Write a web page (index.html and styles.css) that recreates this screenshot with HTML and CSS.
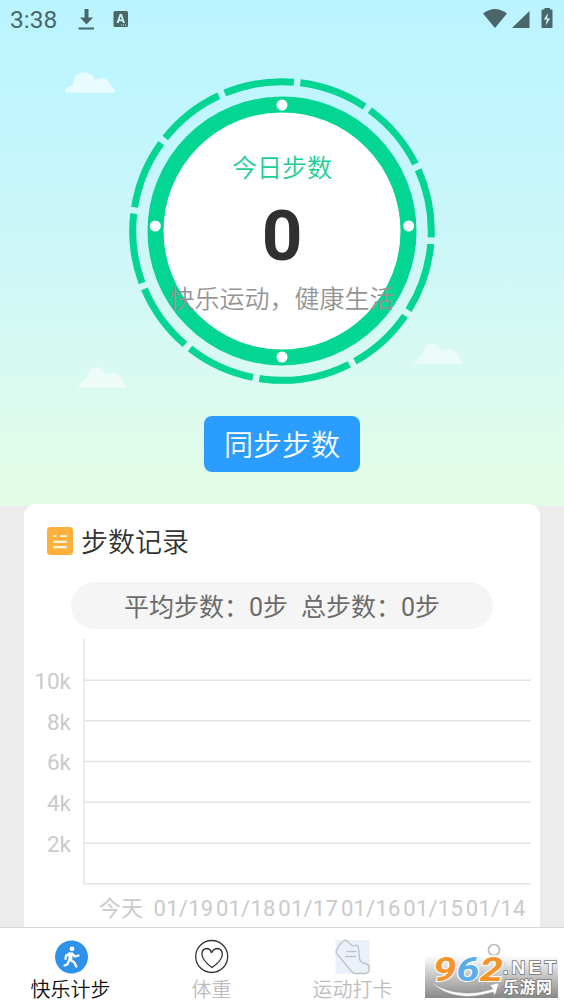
FILE: index.html
```html
<!DOCTYPE html>
<html lang="zh-CN">
<head>
<meta charset="utf-8">
<title>快乐计步</title>
<link rel="stylesheet" href="styles.css">
</head>
<body>
<div class="app">
  <section class="hero">
    <header class="status">
      <span class="clock">3:38</span>
      <svg class="status-left" width="56" height="24" viewBox="0 0 56 24">
        <path d="M7.500 0h4v8.500h4.500l-6.500 7L3 8.500h4.500zM1.500 18.500h15.500v2H1.500z"/>
        <rect x="36.500" y="2" width="14.500" height="16" rx="1.500"/>
        <path class="cut" d="M39.500 14L42.700 5h2.200L48 14h-2.100l-.6-1.800h-3l-.6 1.800zM42.800 10.600h2l-1-3.300z" fill-rule="evenodd"/>
        <path class="cut" d="M44 15.500h1v1h-1zM46 15.500h1v1h-1zM48 15.500h1v1h-1z"/>
      </svg>
      <svg class="status-right" width="72" height="24" viewBox="0 0 72 24">
        <path d="M0 5.500Q12-3.500 24 5.500L12 20z"/>
        <path d="M46.500 3v17h-17.500z"/>
        <path d="M61.500 0h5.500v1.500h1.500a1 1 0 0 1 1 1V19a1 1 0 0 1-1 1h-9a1 1 0 0 1-1-1V2.500a1 1 0 0 1 1-1h2z"/>
        <path class="cut" d="M65 5l-4.300 6.500h3L62.700 17.500l4.500-7h-3z"/>
      </svg>
    </header>
    <svg class="cloud cloud-a" viewBox="0 0 50 21"><path d="M1 20.500Q-1 18 1.500 16Q5 15 8 12.500Q8.500 3 16 .5Q26-1.500 30 8Q35 4.500 40.500 7Q45 10 46.500 14.500Q50 16 50 20.500z"/></svg>
    <svg class="cloud cloud-b" viewBox="0 0 50 21"><path d="M0 20.500Q3 16.500 8 13.500Q10 11 11 6Q14 0 20 0Q26 1 29 8Q35 4.500 40.500 7Q45 10 46.500 14.500Q49 17 50 20.500z"/></svg>
    <svg class="cloud cloud-c" viewBox="0 0 50 21"><path d="M0 20.500Q3 16.500 8 13.500Q10 11 11 6Q14 0 20 0Q26 1 29 8Q35 4.500 40.500 7Q45 10 46.500 14.500Q49 17 50 20.500z"/></svg>
    <div class="dial">
      <svg class="ring" width="308" height="308" viewBox="0 0 308 308">
        <circle class="ring-dashes" cx="154" cy="154" r="149.300" pathLength="360" transform="rotate(-82.950 154 154)"/>
        <circle class="ring-body" cx="154" cy="154" r="126.500"/>
        <g fill="#fff"><circle cx="154" cy="28" r="5.500"/><circle cx="27.300" cy="149" r="5.500"/><circle cx="280.700" cy="149" r="5.500"/><circle cx="154" cy="280" r="5.500"/></g>
      </svg>
      <div class="dial-text">
        <div class="dial-title">今日步数</div>
        <div class="dial-value">0</div>
        <div class="dial-note">快乐运动，健康生活</div>
      </div>
    </div>
    <button class="sync">同步步数</button>
  </section>

  <main class="card">
    <h2 class="card-title">
      <svg width="26" height="28" viewBox="0 0 26 28"><rect width="26" height="28" rx="3.500" fill="#ffb03c"/><g stroke="#fff3dc" stroke-width="2.200" stroke-linecap="round"><path d="M7 9h1.500M14 9h5M7 14.800h12M7 20.200h12"/></g></svg>
      <span>步数记录</span>
    </h2>
    <div class="summary"><span>平均步数：0步</span><span>总步数：0步</span></div>
    <svg class="chart" width="516" height="290" viewBox="24 638 516 290">
      <g class="grid"><path d="M84 680.200H531M84 720.800H531M84 761.500H531M84 802.300H531M84 843.200H531"/></g>
      <path class="axis" d="M84 638.500V883.800H531"/>
      <g class="ylabels"><text x="71" y="689">10k</text><text x="71" y="729.500">8k</text><text x="71" y="770">6k</text><text x="71" y="811">4k</text><text x="71" y="852">2k</text></g>
      <g class="xlabels"><text x="121" y="916">今天</text><text x="183.500" y="916">01/19</text><text x="245.800" y="916">01/18</text><text x="308.200" y="916">01/17</text><text x="370.800" y="916">01/16</text><text x="433.200" y="916">01/15</text><text x="495.700" y="916">01/14</text></g>
    </svg>
  </main>

  <nav class="tabs">
    <div class="tab active">
      <svg width="34" height="36" viewBox="0 0 34 36"><circle cx="17.500" cy="18" r="16.500" fill="#2e91ea"/><circle cx="18" cy="9.800" r="2.400" fill="#fff"/><path d="M15.500 14.500L12 16.800l-.5 3M18.500 15l2.500 2.500 3.500-1M16.500 21l3.800 2.500 2 4M14.800 22l-1.300 3.300-3 1.300" fill="none" stroke="#fff" stroke-width="2.300" stroke-linecap="round" stroke-linejoin="round"/><path d="M14.500 13.500h4.500l-.8 8h-4z" fill="#fff"/></svg>
      <span>快乐计步</span>
    </div>
    <div class="tab">
      <svg width="34" height="36" viewBox="0 0 34 36" fill="none" stroke="#333" stroke-width="1.300"><circle cx="16.700" cy="17.500" r="16"/><path d="M16.500 14Q15.500 9.500 11.500 9.500Q6.500 10 7 16Q8 22 17 28.500Q26.500 22 27.300 16Q27.500 10 22.500 9.500Q18.500 9.500 16.500 14"/></svg>
      <span>体重</span>
    </div>
    <div class="tab">
      <svg width="36" height="36" viewBox="0 0 36 36" fill="none" stroke="#bfc4ca" stroke-width="1.400" stroke-linejoin="round" stroke-linecap="round"><rect x=".5" y="1" width="34.500" height="34" fill="#ebf1fa" stroke="none"/><path d="M8.500 2Q4.500 5 1 12.500Q1 14 2.500 15.500L17 33Q18.500 34.500 21 34.500H30.500Q34 34 34.300 29.500Q34.500 26 31.500 25Q25.500 24 24.500 20L23.500 9Q23 5.500 20.500 6.500Q17.500 7.500 15.500 5.500L11.500 1.500Q10 .8 8.500 2zM12 12.500h9M10.500 17.500h10"/></svg>
      <span>运动打卡</span>
    </div>
    <div class="tab">
      <svg width="36" height="36" viewBox="0 0 36 36" fill="none" stroke="#b9b9b9" stroke-width="1.700"><circle cx="18" cy="11" r="5.500"/><path d="M6 35V28Q7 19 18 19Q29 19 30 28V35"/></svg>
      <span>我的</span>
    </div>
  </nav>

  <div class="watermark">
    <svg width="133" height="43" viewBox="0 0 133 43">
      <defs><linearGradient id="haze" x2="0" y2="1"><stop offset="0" stop-color="#fff" stop-opacity=".7"/><stop offset=".25" stop-color="#ddd" stop-opacity=".88"/><stop offset="1" stop-color="#7c7c7c" stop-opacity=".9"/></linearGradient></defs>
      <rect width="133" height="43" fill="url(#haze)"/>
      <path d="M6 27Q31 45 68 34L65 30L74 28L70 40L68 37Q29 49 6 27z" fill="#fff" stroke="#999" stroke-width=".4"/>
      <text class="mark-num" x="8" y="26" textLength="70" lengthAdjust="spacingAndGlyphs"><tspan fill="#f7932b">9</tspan><tspan fill="#59aeea">6</tspan><tspan fill="#f7932b">2</tspan></text>
      <text class="mark-net" x="78" y="19" textLength="53">.NET</text>
      <text class="mark-cn" x="78" y="38" textLength="49">乐游网</text>
    </svg>
  </div>
</div>
</body>
</html>
```
FILE: styles.css
```css
* { box-sizing: border-box; }
body {
  margin: 0;
  font-family: Roboto, "Noto Sans CJK SC", sans-serif;
}
.app {
  position: relative;
  width: 564px;
  height: 1004px;
  overflow: hidden;
  display: flex;
  flex-direction: column;
  background: #ececec;
}
.hero {
  position: relative;
  flex: none;
  height: 506px;
  display: flex;
  flex-direction: column;
  align-items: center;
  background: linear-gradient(#baf4ff 0%, #c3f6fd 28%, #d0f7f6 55%, #dcfbef 80%, #e3fce5 100%);
}
.status {
  align-self: stretch;
  height: 77px;
  padding: 8px 9px 0 10px;
  display: flex;
  align-items: flex-start;
  color: #4a6669;
  fill: #4a6669;
}
.clock { width: 67px; font-size: 24.5px; line-height: 24px; }
.cut { fill: #c5f2f8; }
.status-left { margin-top: 1px; }
.status-right { margin-left: auto; }
.cloud { position: absolute; width: 50px; height: 21px; fill: #fff; opacity: .65; }
.cloud-a { left: 65px; top: 72px; }
.cloud-b { left: 413px; top: 343px; opacity: .5; }
.cloud-c { left: 77px; top: 367px; opacity: .55; }
.dial { display: grid; width: 308px; height: 308px; }
.ring, .dial-text { grid-area: 1 / 1; }
.ring-dashes {
  fill: none;
  stroke: #03d592;
  stroke-width: 7;
  stroke-dasharray: 26.5 2.5 27.2 2.5 26.7 2.5 27.1 2.5 26.2 2.5 35.5 2.5 26.8 2.5 26.6 2.5 27 2.5 26.9 2.5 26.4 2.5 27.1 2.5;
}
.ring-body { fill: #fff; stroke: #03d592; stroke-width: 16; }
.dial-text {
  z-index: 1;
  padding-top: 74px;
  display: flex;
  flex-direction: column;
  align-items: center;
  white-space: nowrap;
}
.dial-title { font-size: 25px; line-height: 36px; color: #19cf94; font-weight: 350; }
.dial-value { margin-top: 13px; font-size: 71px; line-height: 72px; font-weight: 700; color: #303030; }
.dial-note { margin-top: 10px; font-size: 25px; line-height: 36px; color: #949494; font-weight: 350; }
.sync {
  margin-top: 31px;
  width: 156px;
  height: 56px;
  padding: 4px 0 0;
  border: 0;
  border-radius: 8px;
  background: #2a9dff;
  color: #fff;
  font: 350 29px/52px Roboto, "Noto Sans CJK SC", sans-serif;
}
.card {
  position: relative;
  flex: none;
  margin: -2.5px 24px 0;
  height: 424px;
  border-radius: 12px 12px 0 0;
  background: #fff;
}
.card-title {
  margin: 0;
  height: 78.5px;
  padding: 0 23px 4px;
  display: flex;
  align-items: center;
  gap: 8px;
  font-size: 27px;
  font-weight: 350;
  color: #333;
}
.summary {
  margin: 0 47px;
  height: 47px;
  padding-top: 2px;
  border-radius: 24px;
  display: flex;
  justify-content: center;
  gap: 13px;
  background: #f5f5f5;
  color: #6b6b6b;
  font-size: 25px;
  line-height: 47px;
  white-space: nowrap;
}
.chart { display: block; margin-top: 9px; }
.grid path, .axis { fill: none; stroke: #e3e3e3; stroke-width: 1.4; }
.ylabels, .xlabels { fill: #cacaca; font-size: 22px; }
.ylabels { text-anchor: end; font-size: 22.5px; }
.xlabels { text-anchor: middle; letter-spacing: .25px; }
.tabs {
  position: relative;
  flex: none;
  height: 77px;
  margin-top: -.5px;
  border-top: 1px solid #d6d6d6;
  display: grid;
  grid-template-columns: repeat(4, 1fr);
  background: #fff;
}
.tab {
  padding-top: 11px;
  display: flex;
  flex-direction: column;
  align-items: center;
  color: #bdbdbd;
  font-size: 20px;
  font-weight: 350;
  line-height: 30px;
}
.tab svg { flex: none; }
.tab.active { color: #111; }
.watermark { position: absolute; left: 425px; top: 955px; height: 43px; }
.mark-num {
  font-family: Roboto, sans-serif;
  font-size: 34px;
  font-weight: 700;
  font-style: italic;
  stroke: #fff;
  stroke-width: 2;
  paint-order: stroke;
}
.mark-net, .mark-cn { fill: #fff; stroke: #777; stroke-width: 1.6; paint-order: stroke; font-weight: 700; }
.mark-net { font-family: "Liberation Sans", sans-serif; font-size: 19px; }
.mark-cn { font-family: "Noto Sans CJK SC", sans-serif; font-size: 16px; }
```
